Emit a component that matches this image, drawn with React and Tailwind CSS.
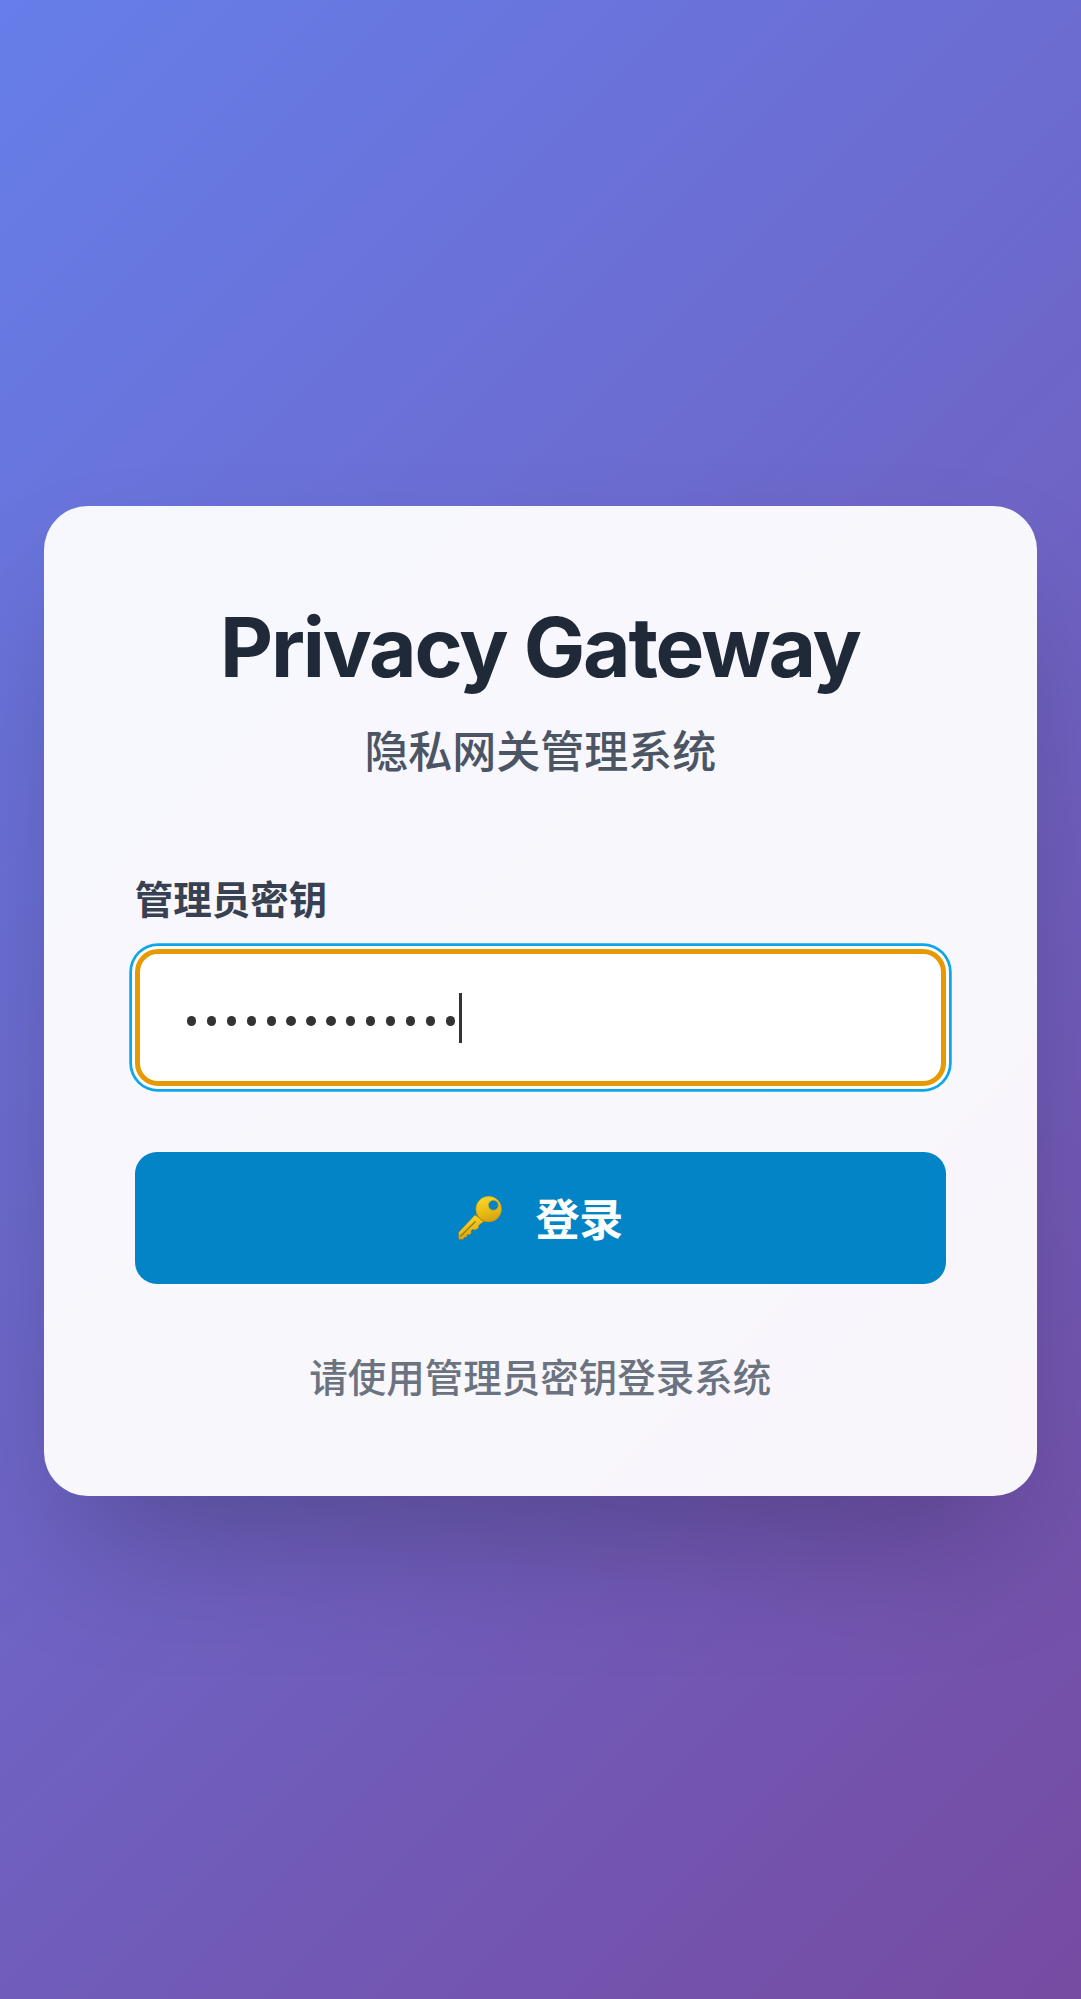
function KeyIcon() {
  return (
    <svg className="h-[44px] w-[44px] translate-x-[1px]" viewBox="0 0 44 44" aria-hidden="true">
      <defs>
        <linearGradient id="gold" x1="0.4" y1="0" x2="0.7" y2="1">
          <stop offset="0" stopColor="#f8d72c" />
          <stop offset="0.55" stopColor="#e8bc14" />
          <stop offset="1" stopColor="#d29e12" />
        </linearGradient>
      </defs>
      <path
        fill="url(#gold)"
        stroke="#b4831a"
        strokeWidth="0.5"
        strokeLinejoin="round"
        d="M17 19 L0.8 36.3 L0.8 43.2 L5.2 43.2 L6.2 41.2 L9 40.8 L9 38.2 L11.6 38.8 L13.4 37 L12.8 35 L14.6 33.2 L17 34 L20.4 32 L20.6 29.4 L26 25 Z"
      />
      <path
        fill="url(#gold)"
        stroke="#c09018"
        strokeWidth="0.5"
        fillRule="evenodd"
        d="M30.7 0.3 A12.8 12.8 0 1 1 30.7 25.9 A12.8 12.8 0 1 1 30.7 0.3 Z M35.4 4.4 A4.9 4.9 0 1 0 35.4 14.2 A4.9 4.9 0 1 0 35.4 4.4 Z"
      />
      <path d="M2.4 40.4 L17.6 25.4" stroke="#8f6a18" strokeWidth="1.2" fill="none" />
      <path d="M1 37.4 L16.4 22" stroke="#f3d23c" strokeWidth="0.8" fill="none" />
      <path d="M18.4 17.5 A13 13 0 0 0 27 25.6" stroke="#b98a14" strokeWidth="1" fill="none" />
    </svg>
  );
}

export default function App() {
  return (
    <div className="h-[1999px] w-[1081px] overflow-hidden bg-[linear-gradient(135deg,#667eea_0%,#764ba2_100%)] pt-[505.75px] pl-[44px] font-['Inter','Noto_Sans_CJK_SC',sans-serif]">
      <main className="flex h-[990.25px] w-[992.75px] flex-col rounded-[44px] bg-white/95 px-[90.75px] pt-[91px] shadow-[0_69px_138px_-33px_rgba(0,0,0,0.25)]">
        <h1 className="pr-[1px] text-center text-[82px] leading-[101px] font-bold tracking-[-2.15px] text-[#1f2937]">Privacy Gateway</h1>
        <p className="mt-[21px] text-center text-[44px] leading-[66px] font-medium text-[#4b5563]">隐私网关管理系统</p>
        <label className="mt-[88px] text-[38.5px] leading-[55px] font-bold text-[#374151]">管理员密钥</label>
        <div className="mt-[21px] flex h-[137.5px] items-center rounded-[23px] border-[5.5px] border-[#e69900] bg-white pl-[47.2px] shadow-[0_0_0_3px_#fff,0_0_0_5.75px_#0ea5e9]">
          <div className="mt-[7px] flex gap-[10.62px]">
            {Array.from({ length: 14 }, (_, i) => (
              <span key={i} className="size-[9.3px] rounded-full bg-[#333333]" />
            ))}
          </div>
          <span className="ml-[4px] h-[50px] w-[3px] bg-[#333333]" />
        </div>
        <button className="mt-[66px] flex h-[132px] items-center justify-center gap-[34px] rounded-[22px] bg-[#0284c7] text-[44px] leading-[66px] font-bold text-white">
          <KeyIcon />
          <span className="pt-[3px]">登录</span>
        </button>
        <p className="mt-[67px] text-center text-[38.5px] leading-[55px] font-medium text-[#6b7280]">请使用管理员密钥登录系统</p>
      </main>
    </div>
  );
}
